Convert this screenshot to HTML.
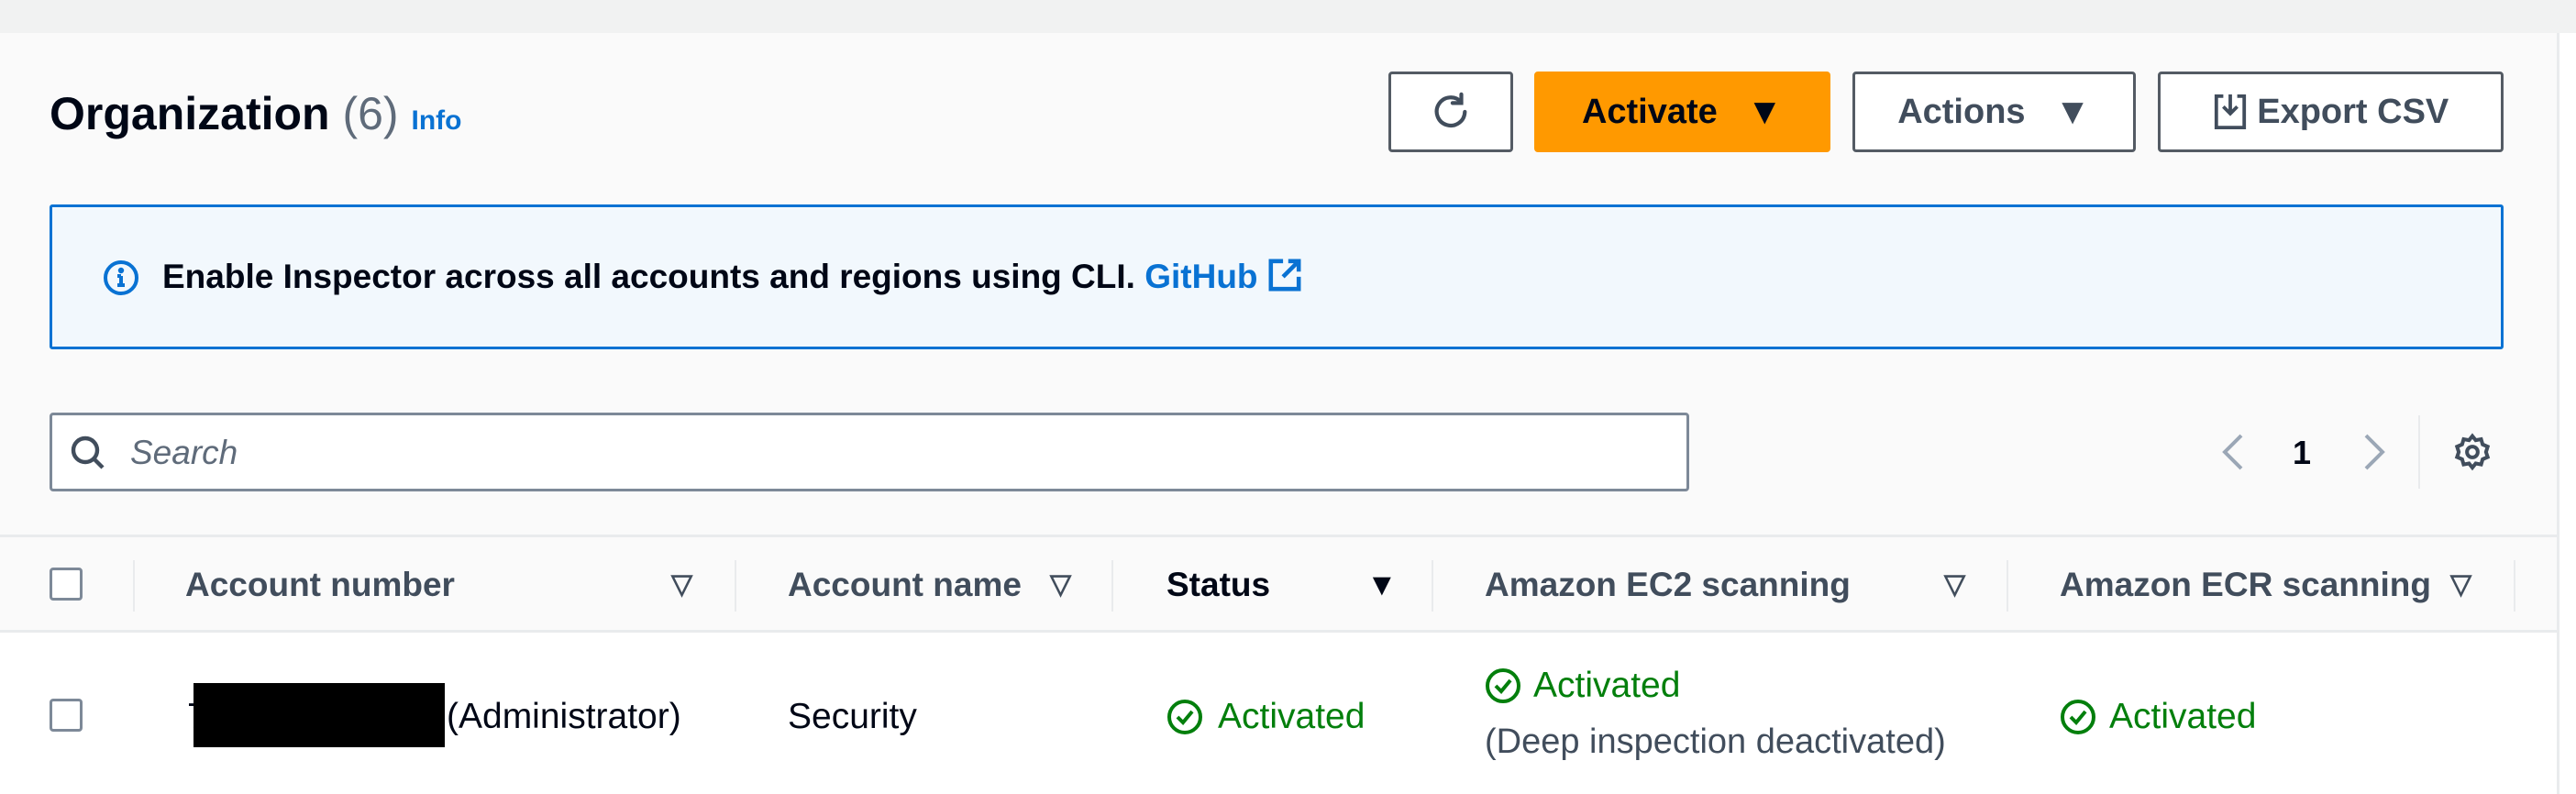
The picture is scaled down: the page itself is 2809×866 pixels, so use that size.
<!DOCTYPE html>
<html><head><meta charset="utf-8"><style>
*{margin:0;padding:0;box-sizing:border-box}
body{width:2809px;height:866px;background:#fff;font-family:"Liberation Sans",sans-serif;position:relative;overflow:hidden;color:#000716}
.a{position:absolute;white-space:nowrap}
.btn{position:absolute;top:78px;height:88px;border:3px solid #545b64;border-radius:4px;background:#fff;display:flex;align-items:center;justify-content:center;font-weight:bold;font-size:38px;color:#414d5c}
.hd{position:absolute;top:616px;font-weight:bold;font-size:37px;color:#414d5c;line-height:44px}
.si{font-size:30px;font-weight:bold}
.dv{position:absolute;top:611px;width:2px;height:56px;background:#e9ebed}
.cb{position:absolute;left:54px;width:36px;height:36px;border:3px solid #7d8998;border-radius:4px;background:#fff}
.ok{color:#037f0c;font-size:39px;line-height:44px}
</style></head><body>
<div class="a" style="left:0;top:0;width:2809px;height:36px;background:#f1f2f2"></div>
<div class="a" style="left:0;top:36px;width:2788px;height:547px;background:#fafafa"></div>
<div class="a" style="left:2788px;top:36px;width:3px;height:830px;background:#e9ebed"></div>
<div class="a" style="left:0;top:583px;width:2788px;height:107px;background:#fafafa;border-top:3px solid #e9ebed;border-bottom:3px solid #e9ebed"></div>

<div class="a" style="left:54px;top:96px;font-size:50px;font-weight:bold;line-height:56px">Organization <span style="font-weight:normal;color:#5f6b7a">(6)</span> <span style="font-size:30px;color:#0972d3">Info</span></div>

<div class="btn" style="left:1514px;width:136px"><svg width="46" height="46" viewBox="0 0 24 24" fill="none" stroke="#414d5c" stroke-width="2.2" stroke-linecap="round"><path d="M18 6.5A8 8 0 1 0 20 12"/><path d="M18 2v5h-5" /></svg></div>
<div class="btn" style="left:1673px;width:323px;background:#ff9900;border-color:#ff9900;color:#000716">Activate&nbsp;&nbsp;&nbsp;<span style="font-size:40px">▼</span></div>
<div class="btn" style="left:2020px;width:309px">Actions&nbsp;&nbsp;&nbsp;<span style="font-size:40px">▼</span></div>
<div class="btn" style="left:2353px;width:377px"><svg width="38" height="42" viewBox="0 0 20 22" fill="none" stroke="#414d5c" stroke-width="2"><path d="M6 2H2v18h16V2h-4"/><path d="M10 1v11M6 8l4 4 4-4"/></svg>&nbsp;Export CSV</div>

<div class="a" style="left:54px;top:223px;width:2676px;height:158px;background:#f2f8fd;border:3px solid #0972d3;border-radius:3px"></div>
<svg class="a" style="left:112px;top:283px" width="40" height="40" viewBox="0 0 20 20" fill="none" stroke="#0972d3" stroke-width="2"><circle cx="10" cy="10" r="8.5"/><path d="M10 9v5M8 14h4M8 9h2"/><circle cx="10" cy="6" r=".6" fill="#0972d3"/></svg>
<div class="a" style="left:177px;top:280px;font-size:37px;font-weight:bold;line-height:44px">Enable Inspector across all accounts and regions using CLI. <span style="color:#0972d3">GitHub</span> <svg width="38" height="38" viewBox="0 0 20 20" fill="none" stroke="#0972d3" stroke-width="2.4" style="vertical-align:-5px"><path d="M9 2H2v16h16v-7M12 2h6v6M18 2l-9 9"/></svg></div>

<div class="a" style="left:54px;top:450px;width:1788px;height:86px;background:#fff;border:3px solid #7d8998;border-radius:4px"></div>
<svg class="a" style="left:76px;top:474px" width="40" height="40" viewBox="0 0 20 20" fill="none" stroke="#414d5c" stroke-width="2.2"><circle cx="8.5" cy="8.5" r="6.5"/><path d="M13 13l5 5"/></svg>
<div class="a" style="left:142px;top:472px;font-size:37px;font-style:italic;color:#5f6b7a;line-height:44px">Search</div>

<svg class="a" style="left:2420px;top:471px" width="30" height="44" viewBox="0 0 15 22" fill="none" stroke="#9ba7b6" stroke-width="2"><path d="M12 2L3 11l9 9"/></svg>
<div class="a" style="left:2500px;top:472px;font-size:36px;font-weight:bold;line-height:44px">1</div>
<svg class="a" style="left:2574px;top:471px" width="30" height="44" viewBox="0 0 15 22" fill="none" stroke="#9ba7b6" stroke-width="2"><path d="M3 2l9 9-9 9"/></svg>
<div class="a" style="left:2637px;top:453px;width:2px;height:80px;background:#e9ebed"></div>
<svg class="a" style="left:2674px;top:471px" width="44" height="44" viewBox="0 0 24 24" fill="none" stroke="#414d5c" stroke-width="2.2"><circle cx="12" cy="12" r="3.2"/><path d="M12 2.5l2 2.5 3.2-.6.9 3.1 3 1.3-1 3.2 1 3-3 1.3-.9 3.1-3.2-.6-2 2.5-2-2.5-3.2.6-.9-3.1-3-1.3 1-3-1-3.2 3-1.3.9-3.1 3.2.6z"/></svg>

<div class="cb" style="top:619px"></div>
<div class="dv" style="left:145px"></div>
<div class="hd" style="left:202px">Account number</div><div class="hd si" style="left:732px">▽</div>
<div class="dv" style="left:801px"></div>
<div class="hd" style="left:859px">Account name</div><div class="hd si" style="left:1145px">▽</div>
<div class="dv" style="left:1212px"></div>
<div class="hd" style="left:1272px;color:#000716">Status</div><div class="hd" style="left:1490px;font-size:34px;color:#000716">▼</div>
<div class="dv" style="left:1561px"></div>
<div class="hd" style="left:1619px">Amazon EC2 scanning</div><div class="hd si" style="left:2120px">▽</div>
<div class="dv" style="left:2188px"></div>
<div class="hd" style="left:2246px">Amazon ECR scanning</div><div class="hd si" style="left:2672px">▽</div>
<div class="dv" style="left:2741px"></div>

<div class="cb" style="top:762px"></div>
<div class="a" style="left:204px;top:760px;font-size:39px;line-height:44px">7</div>
<div class="a" style="left:211px;top:745px;width:274px;height:70px;background:#000"></div>
<div class="a" style="left:487px;top:760px;font-size:39px;line-height:44px">(Administrator)</div>
<div class="a" style="left:859px;top:760px;font-size:39px;line-height:44px">Security</div>

<svg class="a" style="left:1272px;top:762px" width="40" height="40" viewBox="0 0 20 20" fill="none" stroke="#037f0c" stroke-width="2"><circle cx="10" cy="10" r="8.5"/><path d="M6 10l3 3 5-6"/></svg>
<div class="a ok" style="left:1328px;top:760px">Activated</div>
<svg class="a" style="left:1619px;top:728px" width="40" height="40" viewBox="0 0 20 20" fill="none" stroke="#037f0c" stroke-width="2"><circle cx="10" cy="10" r="8.5"/><path d="M6 10l3 3 5-6"/></svg>
<div class="a ok" style="left:1672px;top:726px">Activated</div>
<div class="a" style="left:1619px;top:787px;font-size:38px;line-height:44px;color:#414d5c">(Deep inspection deactivated)</div>
<svg class="a" style="left:2246px;top:762px" width="40" height="40" viewBox="0 0 20 20" fill="none" stroke="#037f0c" stroke-width="2"><circle cx="10" cy="10" r="8.5"/><path d="M6 10l3 3 5-6"/></svg>
<div class="a ok" style="left:2300px;top:760px">Activated</div>
</body></html>
